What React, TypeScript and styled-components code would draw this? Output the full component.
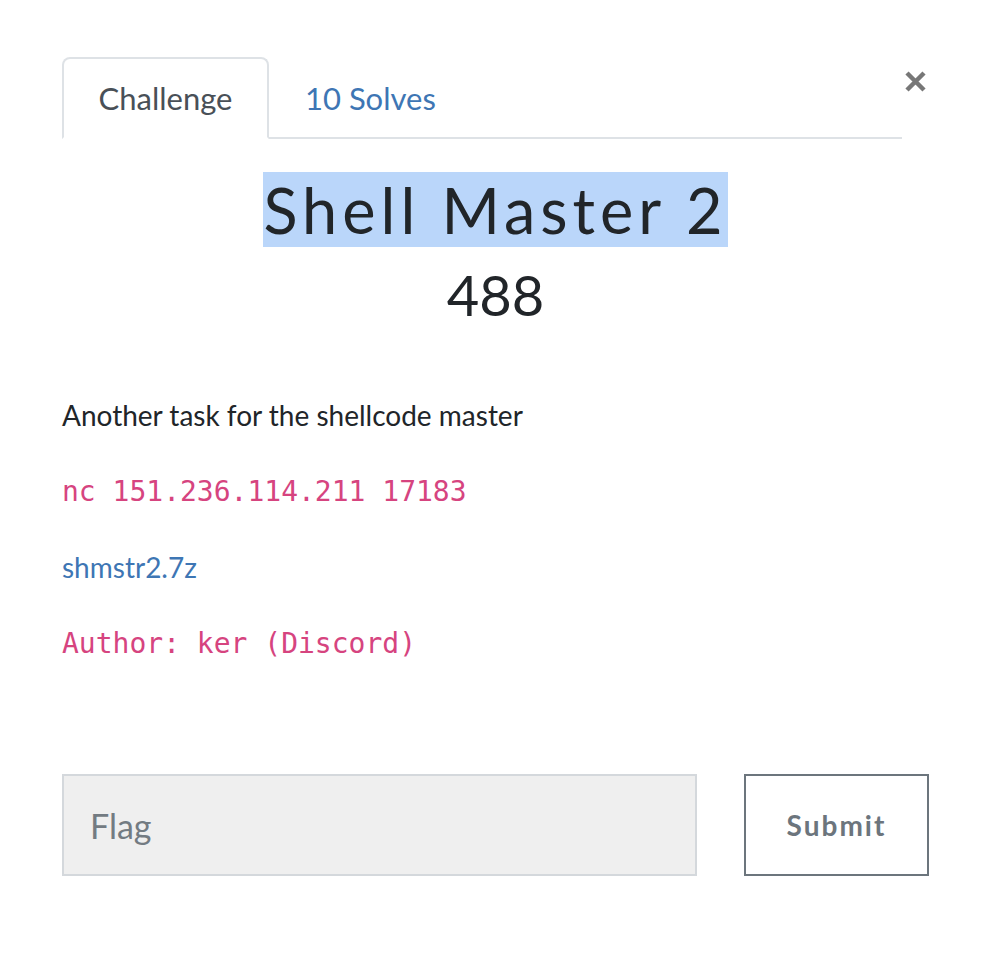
import styled, { createGlobalStyle } from "styled-components";

const Global = createGlobalStyle`
  body {
    margin: 0;
    background: #fff;
    font-family: Lato, "Open Sans", sans-serif;
    color: #212529;
  }
`;

const Modal = styled.div`
  width: 867px;
  padding: 57px 0 0 62px;
`;

const Header = styled.div`
  display: flex;
  align-items: flex-start;
`;

const Nav = styled.div`
  flex: 1;
  display: flex;
  border-bottom: 2px solid #dee2e6;
`;

const Tab = styled.div<{ $active?: boolean }>`
  height: 82px;
  margin-bottom: -2px;
  padding: 0 34px;
  display: flex;
  align-items: center;
  justify-content: center;
  font-size: 31px;
  box-sizing: border-box;
  border: 2px solid ${(p) => (p.$active ? "#dee2e6" : "transparent")};
  border-bottom-color: ${(p) => (p.$active ? "#fff" : "transparent")};
  border-radius: 8px 8px 0 0;
  color: ${(p) => (p.$active ? "#495057" : "#3e76b4")};
  background: ${(p) => (p.$active ? "#fff" : "transparent")};
  width: ${(p) => (p.$active ? "207px" : "auto")};
`;

const Close = styled.div`
  width: 27px;
  height: 27px;
  margin-top: 11px;
  display: flex;
  align-items: center;
  justify-content: center;
`;

const Title = styled.h2`
  margin: 34px 0 0;
  text-align: center;
  font-weight: 400;
  font-size: 63px;
  line-height: 73px;
  letter-spacing: 5px;
`;

const Selected = styled.span`
  background: #bad6fa;
`;

const Points = styled.h3`
  margin: 14px 0 0;
  text-align: center;
  font-weight: 400;
  font-size: 56px;
  line-height: 70px;
`;

const Description = styled.div`
  margin-top: 68px;
  font-size: 28px;
`;

const Para = styled.p`
  margin: 0 0 41px;
  line-height: 34px;
`;

const Code = styled.code`
  font-family: "DejaVu Sans Mono", "Liberation Mono", monospace;
  font-size: 28px;
  color: #d6447f;
`;

const FileLink = styled.a`
  color: #3e76b4;
  text-decoration: none;
`;

const Form = styled.form`
  display: flex;
  gap: 47px;
  margin-top: 113px;
`;

const FlagInput = styled.input`
  flex: 1;
  height: 102px;
  box-sizing: border-box;
  border: 2px solid #d4d8dc;
  background: #efefef;
  padding: 0 26px;
  font-family: Lato, sans-serif;
  font-size: 34px;
  color: #495057;
  &::placeholder {
    color: #737b82;
  }
`;

const SubmitButton = styled.button`
  width: 185px;
  height: 102px;
  box-sizing: border-box;
  border: 2px solid #6c757d;
  background: #fff;
  font-family: Lato, sans-serif;
  font-weight: 700;
  font-size: 28px;
  letter-spacing: 2px;
  color: #6c757d;
`;

export default function App() {
  return (
    <>
      <Global />
      <Modal>
        <Header>
          <Nav>
            <Tab $active>Challenge</Tab>
            <Tab>10 Solves</Tab>
          </Nav>
          <Close>
            <svg width="23" height="23" viewBox="0 0 23 23">
              <path d="M3 3 L20 20 M20 3 L3 20" stroke="#777" strokeWidth="4.5" />
            </svg>
          </Close>
        </Header>
        <Title>
          <Selected>Shell Master 2</Selected>
        </Title>
        <Points>488</Points>
        <Description>
          <Para>Another task for the shellcode master</Para>
          <Para>
            <Code>nc 151.236.114.211 17183</Code>
          </Para>
          <Para>
            <FileLink href="#">shmstr2.7z</FileLink>
          </Para>
          <Para>
            <Code>Author: ker (Discord)</Code>
          </Para>
        </Description>
        <Form onSubmit={(e) => e.preventDefault()}>
          <FlagInput placeholder="Flag" />
          <SubmitButton type="submit">Submit</SubmitButton>
        </Form>
      </Modal>
    </>
  );
}
